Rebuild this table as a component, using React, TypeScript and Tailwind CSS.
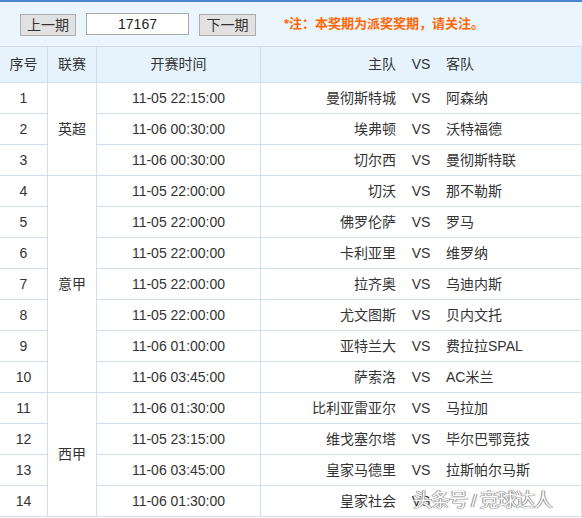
import React from "react";

const rows: [number, string, string, string][] = [
  [1, "11-05 22:15:00", "曼彻斯特城", "阿森纳"],
  [2, "11-06 00:30:00", "埃弗顿", "沃特福德"],
  [3, "11-06 00:30:00", "切尔西", "曼彻斯特联"],
  [4, "11-05 22:00:00", "切沃", "那不勒斯"],
  [5, "11-05 22:00:00", "佛罗伦萨", "罗马"],
  [6, "11-05 22:00:00", "卡利亚里", "维罗纳"],
  [7, "11-05 22:00:00", "拉齐奥", "乌迪内斯"],
  [8, "11-05 22:00:00", "尤文图斯", "贝内文托"],
  [9, "11-06 01:00:00", "亚特兰大", "费拉拉SPAL"],
  [10, "11-06 03:45:00", "萨索洛", "AC米兰"],
  [11, "11-06 01:30:00", "比利亚雷亚尔", "马拉加"],
  [12, "11-05 23:15:00", "维戈塞尔塔", "毕尔巴鄂竞技"],
  [13, "11-06 03:45:00", "皇家马德里", "拉斯帕尔马斯"],
  [14, "11-06 01:30:00", "皇家社会", ""],
];

const font = {
  fontFamily: '"Liberation Sans", Arial, "Noto Sans CJK SC", sans-serif',
};

export default function App() {
  return (
    <div
      className="relative w-[582px] h-[518px] overflow-hidden bg-white text-[14px] text-[#333]"
      style={font}
    >
      {/* top bar */}
      <div className="border-t-2 border-[#4a86cf] h-[46px] bg-[#eaf5fd] flex items-center pl-[20px]">
        <div className="flex items-center mt-[2px]">
          <button className="w-[56px] h-[22px] bg-[#e1e1e1] border border-[#adadad] text-[14px] text-[#333] leading-none flex items-center justify-center">
            上一期
          </button>
          <div className="ml-[10px] w-[103px] h-[22px] bg-white border border-[#a9a9a9] flex items-center justify-center text-[14px] text-[#222] -mt-[2px]">
            17167
          </div>
          <button className="ml-[10px] w-[57px] h-[22px] bg-[#e1e1e1] border border-[#adadad] text-[14px] text-[#333] leading-none flex items-center justify-center">
            下一期
          </button>
          <span className="ml-[28px] text-[13px] font-bold text-[#ff6600] -mt-[2px]">
            *注：本奖期为派奖奖期，请关注。
          </span>
        </div>
      </div>

      {/* table */}
      <div className="grid grid-cols-[47px_48px_163px_320px] gap-px bg-[#cfdfee] pr-px py-px">
        <div className="h-[35px] bg-[#e6f3fd] flex items-center justify-center">序号</div>
        <div className="h-[35px] bg-[#e6f3fd] flex items-center justify-center">联赛</div>
        <div className="h-[35px] bg-[#e6f3fd] flex items-center justify-center">开赛时间</div>
        <div className="h-[35px] bg-[#e6f3fd] flex items-center">
          <span className="w-[135px] text-right">主队</span>
          <span className="w-[50px] text-center">VS</span>
          <span>客队</span>
        </div>

        {rows.map(([n, time, home, away], i) => (
          <React.Fragment key={n}>
            <div
              className="h-[30px] bg-white flex items-center justify-center"
              style={{ gridColumn: 1, gridRow: i + 2 }}
            >
              {n}
            </div>
            <div
              className="h-[30px] bg-white flex items-center justify-center"
              style={{ gridColumn: 3, gridRow: i + 2 }}
            >
              {time}
            </div>
            <div
              className="h-[30px] bg-white flex items-center"
              style={{ gridColumn: 4, gridRow: i + 2 }}
            >
              <span className="w-[135px] text-right">{home}</span>
              <span className="w-[50px] text-center">VS</span>
              {away && <span>{away}</span>}
            </div>
          </React.Fragment>
        ))}

        <div className="bg-white flex items-center justify-center col-start-2 row-start-2 row-span-3">
          英超
        </div>
        <div className="bg-white flex items-center justify-center col-start-2 row-start-5 row-span-7">
          意甲
        </div>
        <div className="bg-white flex items-center justify-center col-start-2 row-start-12 row-span-4">
          西甲
        </div>
      </div>

      {/* watermark */}
      <div
        className="absolute left-[413px] top-[487px] text-[19px] text-white tracking-[-1px] whitespace-nowrap"
        style={{
          textShadow:
            "0 0 1px #777, 0 0 1px #777, 1px 0 0 #aaa, -1px 0 0 #aaa",
        }}
      >
        头条号 / 竞球达人
      </div>
    </div>
  );
}
